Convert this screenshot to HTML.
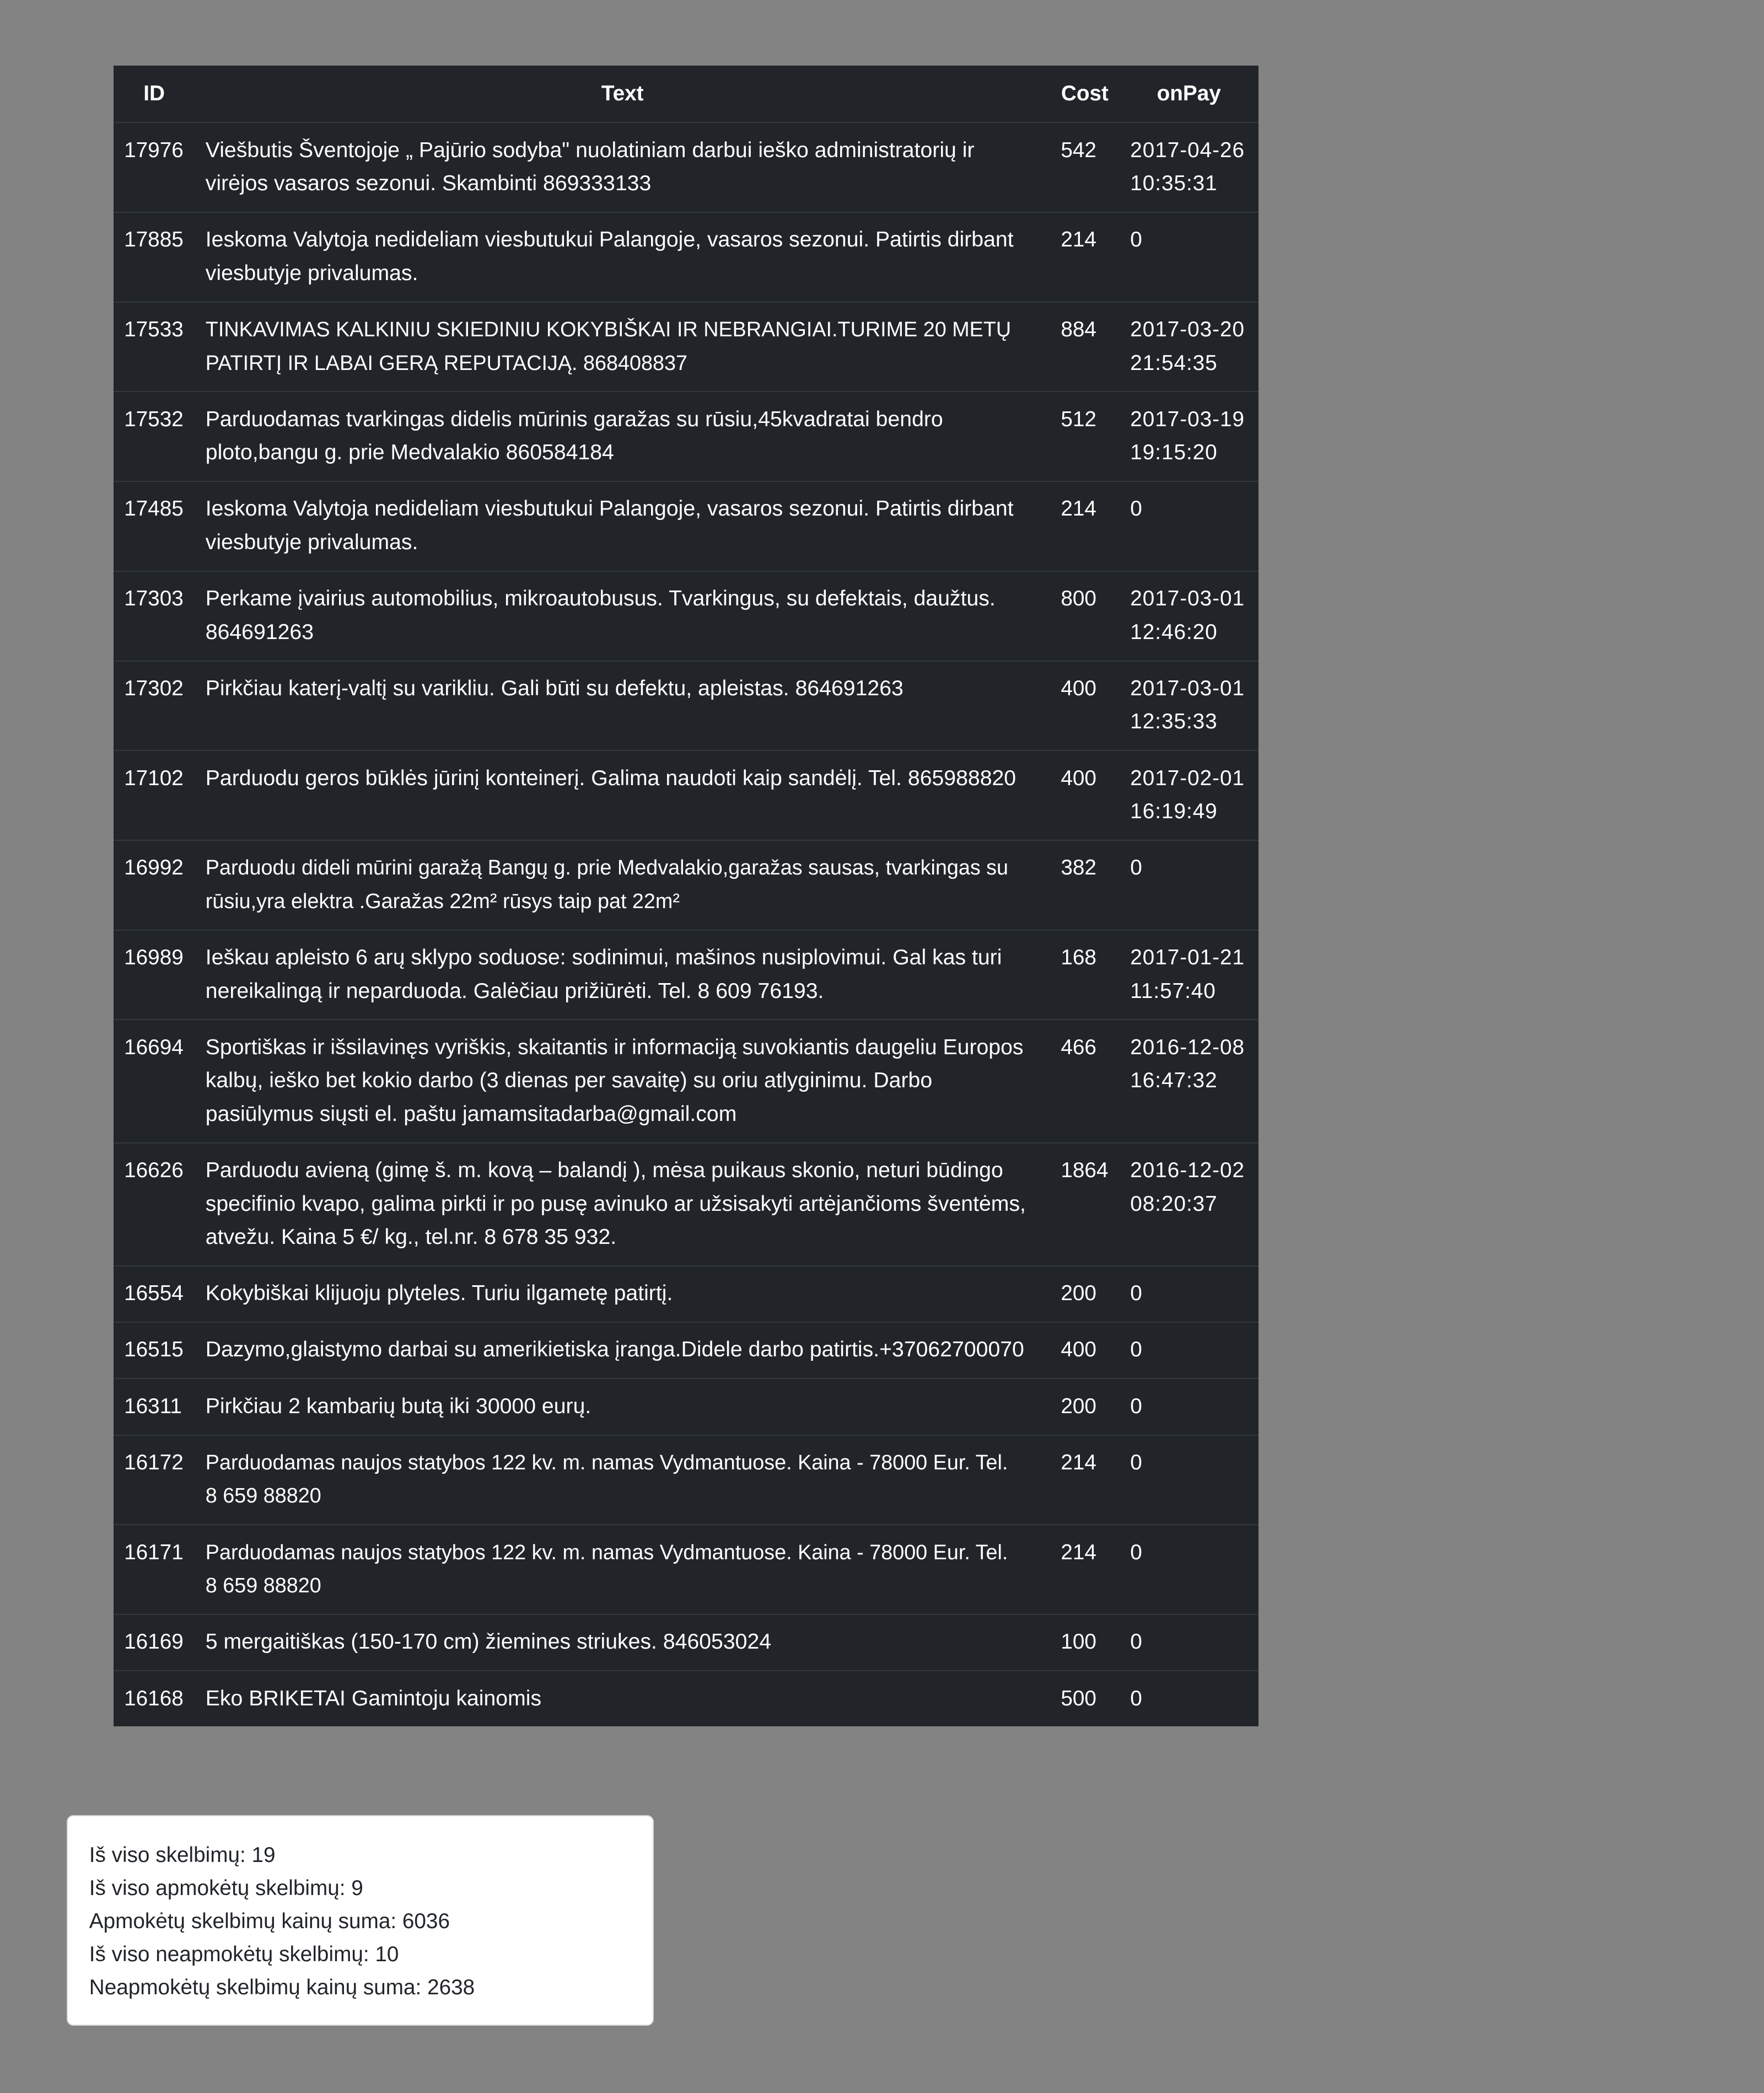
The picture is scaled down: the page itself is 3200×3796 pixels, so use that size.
<!DOCTYPE html>
<html><head><meta charset="utf-8">
<style>
html{zoom:2.4206}
body{margin:0;width:1322px;height:1568px;background:#838383;position:relative;overflow:hidden;font-family:"Liberation Sans",sans-serif;}
table{position:absolute;left:85px;top:49px;width:858px;border-collapse:collapse;table-layout:fixed;background:#212529;color:#fff;font-size:16px;}
td,th{padding:8px 8px 8.4px;line-height:25px;vertical-align:top;border-top:1px solid #32383e;white-space:nowrap;overflow:visible;}
th{font-weight:bold;text-align:center;border-top:none;font-size:16px;padding-top:9px;}
td{text-align:left;}
td:nth-child(2){font-size:16.2px;}
td:nth-child(2) .s{font-size:15.6px;}
td:nth-child(4){letter-spacing:0.4px;}
.card{position:absolute;left:50px;top:1360px;width:440px;height:158px;background:#fff;border:1px solid #d6d6d6;border-radius:5px;box-sizing:border-box;padding:17px 16px;color:#212529;font-size:16px;line-height:24.8px;}
</style></head><body>
<table>
<colgroup><col style="width:61px"><col style="width:641px"><col style="width:52px"><col style="width:104px"></colgroup>
<tr><th>ID</th><th>Text</th><th>Cost</th><th>onPay</th></tr>
<tr><td>17976</td><td>Viešbutis Šventojoje „ Pajūrio sodyba" nuolatiniam darbui ieško administratorių ir<br>virėjos vasaros sezonui. Skambinti 869333133</td><td>542</td><td>2017-04-26<br>10:35:31</td></tr>
<tr><td>17885</td><td>Ieskoma Valytoja nedideliam viesbutukui Palangoje, vasaros sezonui. Patirtis dirbant<br>viesbutyje privalumas.</td><td>214</td><td>0</td></tr>
<tr><td>17533</td><td><span class="s">TINKAVIMAS KALKINIU SKIEDINIU KOKYBIŠKAI IR NEBRANGIAI.TURIME 20 METŲ<br>PATIRTĮ IR LABAI GERĄ REPUTACIJĄ. 868408837</span></td><td>884</td><td>2017-03-20<br>21:54:35</td></tr>
<tr><td>17532</td><td>Parduodamas tvarkingas didelis mūrinis garažas su rūsiu,45kvadratai bendro<br>ploto,bangu g. prie Medvalakio 860584184</td><td>512</td><td>2017-03-19<br>19:15:20</td></tr>
<tr><td>17485</td><td>Ieskoma Valytoja nedideliam viesbutukui Palangoje, vasaros sezonui. Patirtis dirbant<br>viesbutyje privalumas.</td><td>214</td><td>0</td></tr>
<tr><td>17303</td><td>Perkame įvairius automobilius, mikroautobusus. Tvarkingus, su defektais, daužtus.<br>864691263</td><td>800</td><td>2017-03-01<br>12:46:20</td></tr>
<tr><td>17302</td><td>Pirkčiau katerį-valtį su varikliu. Gali būti su defektu, apleistas. 864691263</td><td>400</td><td>2017-03-01<br>12:35:33</td></tr>
<tr><td>17102</td><td>Parduodu geros būklės jūrinį konteinerį. Galima naudoti kaip sandėlį. Tel. 865988820</td><td>400</td><td>2017-02-01<br>16:19:49</td></tr>
<tr><td>16992</td><td><span class="s">Parduodu dideli mūrini garažą Bangų g. prie Medvalakio,garažas sausas, tvarkingas su<br>rūsiu,yra elektra .Garažas 22m² rūsys taip pat 22m²</span></td><td>382</td><td>0</td></tr>
<tr><td>16989</td><td>Ieškau apleisto 6 arų sklypo soduose: sodinimui, mašinos nusiplovimui. Gal kas turi<br>nereikalingą ir neparduoda. Galėčiau prižiūrėti. Tel. 8 609 76193.</td><td>168</td><td>2017-01-21<br>11:57:40</td></tr>
<tr><td>16694</td><td>Sportiškas ir išsilavinęs vyriškis, skaitantis ir informaciją suvokiantis daugeliu Europos<br>kalbų, ieško bet kokio darbo (3 dienas per savaitę) su oriu atlyginimu. Darbo<br>pasiūlymus siųsti el. paštu jamamsitadarba@gmail.com</td><td>466</td><td>2016-12-08<br>16:47:32</td></tr>
<tr><td>16626</td><td>Parduodu avieną (gimę š. m. kovą – balandį ), mėsa puikaus skonio, neturi būdingo<br>specifinio kvapo, galima pirkti ir po pusę avinuko ar užsisakyti artėjančioms šventėms,<br>atvežu. Kaina 5 €/ kg., tel.nr. 8 678 35 932.</td><td>1864</td><td>2016-12-02<br>08:20:37</td></tr>
<tr><td>16554</td><td>Kokybiškai klijuoju plyteles. Turiu ilgametę patirtį.</td><td>200</td><td>0</td></tr>
<tr><td>16515</td><td>Dazymo,glaistymo darbai su amerikietiska įranga.Didele darbo patirtis.+37062700070</td><td>400</td><td>0</td></tr>
<tr><td>16311</td><td>Pirkčiau 2 kambarių butą iki 30000 eurų.</td><td>200</td><td>0</td></tr>
<tr><td>16172</td><td><span class="s">Parduodamas naujos statybos 122 kv. m. namas Vydmantuose. Kaina - 78000 Eur. Tel.<br>8 659 88820</span></td><td>214</td><td>0</td></tr>
<tr><td>16171</td><td><span class="s">Parduodamas naujos statybos 122 kv. m. namas Vydmantuose. Kaina - 78000 Eur. Tel.<br>8 659 88820</span></td><td>214</td><td>0</td></tr>
<tr><td>16169</td><td>5 mergaitiškas (150-170 cm) žiemines striukes. 846053024</td><td>100</td><td>0</td></tr>
<tr><td>16168</td><td>Eko BRIKETAI Gamintoju kainomis</td><td>500</td><td>0</td></tr>
</table>
<div class="card">Iš viso skelbimų: 19<br>Iš viso apmokėtų skelbimų: 9<br>Apmokėtų skelbimų kainų suma: 6036<br>Iš viso neapmokėtų skelbimų: 10<br>Neapmokėtų skelbimų kainų suma: 2638</div>
</body></html>
